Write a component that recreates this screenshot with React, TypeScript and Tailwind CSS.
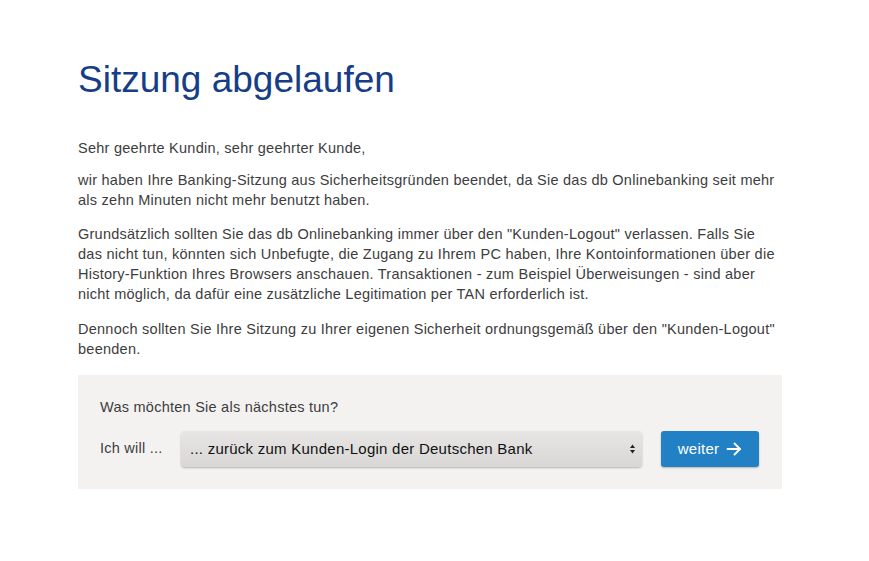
export default function App() {
  return (
    <div className="min-h-screen bg-white" style={{ fontFamily: '"Liberation Sans", Arial, sans-serif' }}>
      <div className="ml-[78px] w-[704px] pt-[58px]">
        <h1 className="text-[37px] leading-[44px] text-[#163d87] mb-[36px]">Sitzung abgelaufen</h1>

        <div className="text-[14.5px] leading-5 tracking-[0.25px] text-[#3d3d3d]">
          <p className="mb-[12px]">Sehr geehrte Kundin, sehr geehrter Kunde,</p>
          <p className="mb-[14px]">
            wir haben Ihre Banking-Sitzung aus Sicherheitsgründen beendet, da Sie das db Onlinebanking seit mehr
            <br />
            als zehn Minuten nicht mehr benutzt haben.
          </p>
          <p className="mb-[15px]">
            Grundsätzlich sollten Sie das db Onlinebanking immer über den "Kunden-Logout" verlassen. Falls Sie
            <br />
            das nicht tun, könnten sich Unbefugte, die Zugang zu Ihrem PC haben, Ihre Kontoinformationen über die
            <br />
            History-Funktion Ihres Browsers anschauen. Transaktionen - zum Beispiel Überweisungen - sind aber
            <br />
            nicht möglich, da dafür eine zusätzliche Legitimation per TAN erforderlich ist.
          </p>
          <p>
            Dennoch sollten Sie Ihre Sitzung zu Ihrer eigenen Sicherheit ordnungsgemäß über den "Kunden-Logout"
            <br />
            beenden.
          </p>
        </div>

        <div className="mt-[16px] bg-[#f3f2f1] pl-[22px] pr-[23px] pt-[22px] pb-[22px]">
          <p className="text-[14.5px] tracking-[0.25px] leading-5 text-[#3d3d3d] mb-[14px]">Was möchten Sie als nächstes tun?</p>
          <div className="flex items-center">
            <span className="w-[81px] text-[14.5px] tracking-[0.25px] text-[#3d3d3d]">Ich will ...</span>
            <div className="relative w-[461px] h-[36px] rounded-[4px] bg-gradient-to-b from-[#e7e6e5] to-[#d8d7d6] shadow-[0_1px_2px_rgba(0,0,0,0.25)] flex items-center pl-[9px]">
              <span className="text-[15px] tracking-[0.25px] text-[#111]">... zurück zum Kunden-Login der Deutschen Bank</span>
              <svg className="absolute right-[6px] top-1/2 -translate-y-1/2" width="7" height="13" viewBox="0 0 7 13">
                <path d="M3.5 2 L6 5.5 L1 5.5 Z" fill="#222" />
                <path d="M3.5 11 L6 7.5 L1 7.5 Z" fill="#222" />
              </svg>
            </div>
            <button className="ml-[19px] w-[98px] h-[36px] rounded-[3px] bg-[#2181c4] text-white text-[15px] tracking-[0.25px] flex items-center justify-center gap-[7px] shadow-[0_1px_2px_rgba(0,0,0,0.25)]">
              weiter
              <svg width="16" height="14" viewBox="0 0 16 14" fill="none" stroke="white" strokeWidth="1.8" strokeLinecap="round" strokeLinejoin="round">
                <path d="M1.5 7 H14" />
                <path d="M8.5 1.5 L14 7 L8.5 12.5" />
              </svg>
            </button>
          </div>
        </div>
      </div>
    </div>
  );
}
